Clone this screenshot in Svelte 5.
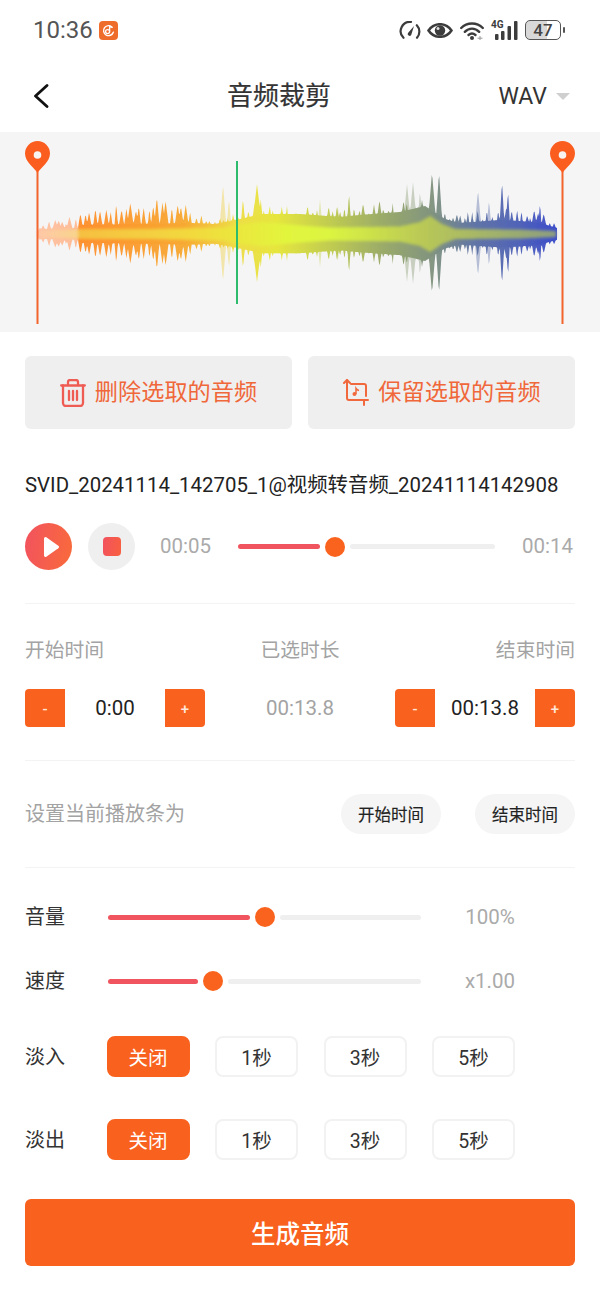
<script>
  const C = 102;
  const env = [[38,6],[44,13],[60,16],[78,18],[82,25],[90,30],[100,31],[115,32],[135,38],[150,37],[170,38],[188,33],[200,21],[215,16],[230,18],[240,26],[250,31],[262,36],[275,28],[295,30],[320,27],[340,29],[349,31],[380,36],[400,34],[420,34],[432,34],[445,24],[460,22],[480,24],[495,28],[510,32],[525,26],[540,28],[548,12],[557,16]];
  const floorT = [[38,3],[44,5],[78,6],[82,9],[190,11],[215,10],[240,15],[262,20],[300,20],[340,17],[360,19],[400,22],[425,28],[445,15],[460,11],[500,14],[520,13],[540,11],[557,6]];
  const tall = [[243,36,3],[257,50,6],[349,42,2.500],[432,62,5],[439,62,4],[502,53,3],[508,44,2.500],[540,32,2]];
  const faint = [[223,50,4],[229,36,3],[270,30,3],[320,35,3],[338,26,3],[407,50,5],[413,52,5],[420,44,3],[478,44,4],[489,34,3]];

  function lerp(table, x) {
    for (let i = 1; i < table.length; i++) {
      if (x <= table[i][0]) {
        const a = table[i - 1], b = table[i];
        return b[1] + ((a[1] - b[1]) * (b[0] - x)) / (b[0] - a[0]);
      }
    }
    return table[table.length - 1][1];
  }
  function rnd(k) {
    const s = Math.sin(k * 12.9898 + 4.100) * 43758.5453;
    return s - Math.floor(s);
  }
  function peakAmp(list, x) {
    let m = 0;
    for (const [px, a, w] of list) m = Math.max(m, a * (1 - Math.abs(x - px) / w));
    return m;
  }
  const spikes = [];
  for (let x = 40, k = 0; x < 557; k++) {
    spikes.push([x, lerp(env, x) * (0.62 + 0.4 * rnd(k)), 2.400 + 2.400 * rnd(k + 90)]);
    x += 2.800 + 3.600 * rnd(k + 50);
  }
  function shape(fn, start = 38, end = 557, step = 0.75, k = 0.96) {
    const top = [], bot = [];
    for (let x = start; x <= end; x += step) {
      const a = fn(x);
      top.push(`${x},${(C - a).toFixed(1)}`);
      bot.unshift(`${x},${(C + a * k).toFixed(1)}`);
    }
    return 'M' + top.concat(bot).join('L') + 'Z';
  }
  const mainPath = shape((x) => Math.max(lerp(floorT, x), peakAmp(spikes, x), peakAmp(tall, x)));
  const faintPath = shape((x) => Math.max(lerp(floorT, x), peakAmp(faint, x)));
  const coreTable = [[38,2],[42,4],[79,4.500],[80,5],[150,5],[225,6.500],[240,10],[262,12],[300,8.500],[330,6.500],[400,7.500],[420,12],[430,18],[442,10],[455,5],[520,4.500],[557,3]];
  const corePath = shape((x) => lerp(coreTable, x), 38, 557, 2, 1);

  const fades = ['淡入', '淡出'];
  const opts = ['关闭', '1秒', '3秒', '5秒'];
</script>

<div class="page">
  <div class="status">
    <span class="clock">10:36</span>
    <svg class="appicon" width="19" height="19" viewBox="0 0 19 19">
      <rect width="19" height="19" rx="4" fill="#ef6d2b" />
      <path d="M13.200 6.200a5 5 0 1 0 1.100 5" fill="none" stroke="#fff" stroke-width="1.400" stroke-linecap="round" />
      <circle cx="8.600" cy="10.600" r="2" fill="none" stroke="#fff" stroke-width="1.300" />
      <path d="M10.600 10.600V4.600q.6 1.600 2.200 1.900" fill="none" stroke="#fff" stroke-width="1.300" />
    </svg>
    <div class="sicons">
      <svg width="22" height="18" viewBox="0 0 22 18">
        <path d="M4.500 16.800A9.300 9.300 0 0 1 12 .9" fill="none" stroke="#3c3c3c" stroke-width="2.200" stroke-linecap="round" />
        <path d="M17.800 4.200a9.300 9.300 0 0 1 .2 12.600" fill="none" stroke="#3c3c3c" stroke-width="2.200" stroke-linecap="round" />
        <path d="M9 12l6-7-2.800 9a1.800 1.800 0 0 1-3.200-2z" fill="#3c3c3c" />
      </svg>
      <svg width="26" height="15" viewBox="0 0 26 15">
        <path d="M1.500 7.500C4.500 3 8 1.200 13 1.200S21.500 3 24.500 7.500C21.500 12 18 13.800 13 13.800S4.500 12 1.500 7.500z" fill="none" stroke="#3c3c3c" stroke-width="2.500" />
        <circle cx="13" cy="7.500" r="5.200" fill="#3c3c3c" />
        <circle cx="11" cy="5.500" r="1.500" fill="#ddd" />
      </svg>
      <svg width="24" height="19" viewBox="0 0 24 19">
        <path d="M1.200 7C7 1 17 1 22.800 7" fill="none" stroke="#3c3c3c" stroke-width="2.400" stroke-linecap="round" />
        <path d="M4.800 10.800C9 6.600 15 6.600 19.200 10.800" fill="none" stroke="#3c3c3c" stroke-width="2.400" stroke-linecap="round" />
        <path d="M8.500 14c2.200-1.800 4.800-1.800 7 0" fill="none" stroke="#3c3c3c" stroke-width="2.400" stroke-linecap="round" />
        <circle cx="12" cy="17" r="2" fill="#3c3c3c" />
        <path d="M17.500 17.200h5M20 15v4.400" fill="none" stroke="#999" stroke-width="1" />
      </svg>
      <div class="signal">
        <span class="g4">4G</span>
        <svg width="27" height="19" viewBox="0 0 27 19">
          <rect x="4" y="13" width="3.500" height="6" rx="1" fill="#3c3c3c" />
          <rect x="10" y="10" width="3.500" height="9" rx="1" fill="#3c3c3c" />
          <rect x="16.500" y="5" width="3.500" height="14" rx="1" fill="#3c3c3c" />
          <rect x="23" y="0" width="3.500" height="19" rx="1" fill="#3c3c3c" />
        </svg>
      </div>
      <div class="battery">
        <div class="cell"><span>47</span></div>
        <i class="nub"></i>
      </div>
    </div>
  </div>

  <header class="nav">
    <svg class="back" width="16" height="24" viewBox="0 0 16 24">
      <path d="M14 1.500L2.500 12 14 22.500" fill="none" stroke="#111" stroke-width="2.800" stroke-linecap="round" stroke-linejoin="round" />
    </svg>
    <h1>音频裁剪</h1>
    <div class="fmt"><span>WAV</span><i class="caret"></i></div>
  </header>

  <svg class="wave" width="600" height="200" viewBox="0 0 600 200">
    <defs>
      <linearGradient id="outer" gradientUnits="userSpaceOnUse" x1="38" y1="0" x2="557" y2="0">
        <stop offset="0" stop-color="#ffc0a0" />
        <stop offset="0.075" stop-color="#ffb890" />
        <stop offset="0.08" stop-color="#ff8a24" />
        <stop offset="0.28" stop-color="#f8a52a" />
        <stop offset="0.38" stop-color="#eedb3e" />
        <stop offset="0.46" stop-color="#e6e636" />
        <stop offset="0.56" stop-color="#bfcb48" />
        <stop offset="0.66" stop-color="#98a962" />
        <stop offset="0.76" stop-color="#7b8f7a" />
        <stop offset="0.84" stop-color="#5a6fa2" />
        <stop offset="0.92" stop-color="#4a5eb4" />
        <stop offset="1" stop-color="#3344c8" />
      </linearGradient>
      <linearGradient id="core" gradientUnits="userSpaceOnUse" x1="38" y1="0" x2="557" y2="0">
        <stop offset="0" stop-color="#ffc8a8" />
        <stop offset="0.075" stop-color="#f8d48c" />
        <stop offset="0.08" stop-color="#f6bf40" />
        <stop offset="0.3" stop-color="#f2da3e" />
        <stop offset="0.48" stop-color="#e2f53e" />
        <stop offset="0.56" stop-color="#dcf540" />
        <stop offset="0.74" stop-color="#b9c856" />
        <stop offset="1" stop-color="#8c9e7e" />
      </linearGradient>
      <filter id="soft" x="-5%" y="-5%" width="110%" height="110%"><feGaussianBlur stdDeviation="0.5" /></filter>
      <filter id="softer" x="-5%" y="-20%" width="110%" height="140%"><feGaussianBlur stdDeviation="1.500" /></filter>
    </defs>
    <rect width="600" height="200" fill="#f5f5f6" />
    <path d={faintPath} fill="url(#outer)" opacity="0.4" filter="url(#soft)" />
    <path d={mainPath} fill="url(#outer)" opacity="0.92" filter="url(#soft)" />
    <path d={corePath} fill="url(#core)" filter="url(#softer)" />
    <rect x="236" y="29" width="2" height="143" fill="#2dbb6e" />
    {#each [37.5, 562.5] as x}
      <g transform="translate({x} 0)">
        <rect x="-1" y="35" width="2" height="157" fill="#f4652c" />
        <path d="M0 41C-3 36-12.500 30-12.500 21.500a12.500 12.500 0 0 1 25 0C12.500 30 3 36 0 41z" fill="#fb5d1e" />
        <circle cx="0" cy="23" r="3.800" fill="#f7f4f2" />
      </g>
    {/each}
  </svg>

  <main class="body">
    <div class="actions">
      <button class="act">
        <svg width="26" height="28" viewBox="0 0 26 28">
          <g fill="none" stroke="#ef5c54" stroke-width="2.300" stroke-linecap="round" stroke-linejoin="round">
            <path d="M8 6V3a2 2 0 0 1 2-2h6a2 2 0 0 1 2 2v3" />
            <path d="M1.200 6.500h23.600" />
            <path d="M3 6.500V24a3 3 0 0 0 3 3h14a3 3 0 0 0 3-3V6.500" />
            <path d="M9 12v9M13 12v9M17 12v9" />
          </g>
        </svg>
        <span>删除选取的音频</span>
      </button>
      <button class="act">
        <svg width="27" height="27" viewBox="0 0 27 27">
          <g fill="none" stroke="#f0683c" stroke-width="2" stroke-linecap="round" stroke-linejoin="round">
            <path d="M5 1v18a2 2 0 0 0 2 2h19" />
            <path d="M2 4l3-3 3 3" />
            <path d="M22 26v-5" />
            <path d="M9 5h13a2 2 0 0 1 2 2v10" />
          </g>
          <circle cx="12.500" cy="15" r="2" fill="#f0683c" />
          <path d="M14 15V9.500q1 1.700 3 2" fill="none" stroke="#f0683c" stroke-width="1.500" />
        </svg>
        <span>保留选取的音频</span>
      </button>
    </div>

    <p class="fname">SVID_20241114_142705_1@视频转音频_20241114142908</p>

    <div class="player">
      <div class="play"><svg width="20" height="22" viewBox="0 0 20 22"><path d="M4 2.500v17a1.500 1.500 0 0 0 2.300 1.200l12-8.500a1.500 1.500 0 0 0 0-2.400l-12-8.500A1.500 1.500 0 0 0 4 2.500z" fill="#fff" /></svg></div>
      <div class="stop"><i></i></div>
      <span class="t t1">00:05</span>
      <div class="slider pslider">
        <i class="on" style="width:82px"></i>
        <i class="thumb"></i>
        <i class="off"></i>
      </div>
      <span class="t t2">00:14</span>
    </div>

    <hr />

    <div class="labels">
      <span>开始时间</span><span>已选时长</span><span>结束时间</span>
    </div>

    <div class="steppers">
      <div class="stepper">
        <button class="sb minus">-</button>
        <span class="val">0:00</span>
        <button class="sb plus">+</button>
      </div>
      <span class="dur">00:13.8</span>
      <div class="stepper">
        <button class="sb minus">-</button>
        <span class="val">00:13.8</span>
        <button class="sb plus">+</button>
      </div>
    </div>

    <hr />

    <div class="setrow">
      <span class="setlabel">设置当前播放条为</span>
      <button class="pill p1">开始时间</button>
      <button class="pill">结束时间</button>
    </div>

    <hr />

    <div class="prow vol">
      <span class="plabel">音量</span>
      <div class="slider wslider">
        <i class="on" style="width:142px"></i>
        <i class="thumb"></i>
        <i class="off"></i>
      </div>
      <span class="pval">100%</span>
    </div>
    <div class="prow spd">
      <span class="plabel">速度</span>
      <div class="slider wslider">
        <i class="on" style="width:90px"></i>
        <i class="thumb"></i>
        <i class="off"></i>
      </div>
      <span class="pval">x1.00</span>
    </div>

    {#each fades as f, i}
      <div class="fade" class:second={i === 1}>
        <span class="flabel">{f}</span>
        <div class="fopts">
          {#each opts as o, j}
            <button class="opt" class:sel={j === 0}>{o}</button>
          {/each}
        </div>
      </div>
    {/each}

    <button class="gen">生成音频</button>
  </main>
</div>

<style>
  :global(body) { margin: 0; background: #fff; }
  .page {
    width: 600px;
    height: 1299px;
    overflow: hidden;
    background: #fff;
    font-family: Roboto, "Noto Sans CJK SC", sans-serif;
    color: #222;
  }
  i { display: block; }
  .status { height: 60px; display: flex; align-items: center; padding: 0 35px 0 33px; box-sizing: border-box; }
  .clock { font-size: 24px; color: #555; }
  .appicon { margin-left: 6px; }
  .sicons { margin-left: auto; display: flex; align-items: center; }
  .sicons > svg:nth-child(1) { margin-right: 6px; }
  .sicons > svg:nth-child(2) { margin-right: 7px; }
  .sicons > svg:nth-child(3) { margin-right: 7px; }
  .signal { position: relative; width: 27px; height: 19px; margin-right: 7px; }
  .signal svg { display: block; }
  .g4 { position: absolute; left: 0; top: -1px; font-size: 10px; line-height: 10px; font-weight: 700; color: #3c3c3c; }
  .battery { display: flex; align-items: center; gap: 2px; }
  .cell { width: 36px; height: 20px; box-sizing: border-box; border: 1.500px solid #555; border-radius: 5px; background: linear-gradient(90deg, #d8d8d8 0 62%, #fff 62%); display: flex; align-items: center; justify-content: center; }
  .cell span { font-size: 17px; font-weight: 500; color: #444; line-height: 1; }
  .nub { width: 2px; height: 6px; background: #555; border-radius: 1px; }

  .nav { height: 72px; display: flex; align-items: center; padding: 0 30px 0 33px; box-sizing: border-box; }
  .nav h1 { margin: 0 0 0 178px; font-size: 26px; line-height: 72px; font-weight: 400; color: #333; -webkit-text-stroke: 0.2px #333; }
  .back { display: block; flex: none; }
  .fmt { margin-left: auto; display: flex; align-items: center; gap: 9px; font-size: 23px; color: #333; }
  .caret { width: 0; height: 0; border-left: 7px solid transparent; border-right: 7px solid transparent; border-top: 7px solid #cfcfcf; margin-top: 1px; }

  .wave { display: block; }

  .body { padding: 24px 25px 0; }
  .actions { display: flex; justify-content: space-between; }
  button { font-family: inherit; border: 0; padding: 0; margin: 0; }
  .act { width: 267px; height: 73px; background: #efefef; border-radius: 6px; display: flex; align-items: center; justify-content: center; gap: 9px; color: #f0673a; font-size: 23.200px; line-height: 1; }
  .act svg { display: block; flex: none; }
  .fname { margin: 42px 0 0; font-size: 20.400px; line-height: 28px; color: #222; white-space: nowrap; }

  .player { margin-top: 24px; height: 47px; display: flex; align-items: center; }
  .play { width: 47px; height: 47px; border-radius: 50%; background: linear-gradient(100deg, #f2525f, #f96b3a); display: flex; align-items: center; justify-content: center; padding-left: 2px; box-sizing: border-box; }
  .stop { width: 47px; height: 47px; border-radius: 50%; background: #efefef; margin-left: 16px; display: flex; align-items: center; justify-content: center; }
  .stop i { width: 18px; height: 19px; border-radius: 4px; background: linear-gradient(100deg, #f2525f, #f8603f); }
  .t { font-size: 20.500px; color: #aaa; line-height: 1; width: 51px; flex: none; }
  .t1 { margin-left: 25px; }
  .t2 { margin-left: 27px; }

  .slider { display: flex; align-items: center; }
  .slider .on { height: 5px; background: #f0555f; border-radius: 3px; }
  .slider .off { flex: 1; height: 5px; background: #efefef; border-radius: 3px; margin-left: 5px; }
  .slider .thumb { width: 20px; height: 20px; border-radius: 50%; background: #fa631d; margin-left: 5px; flex: none; }
  .pslider { width: 257px; margin-left: 27px; }
  .wslider { width: 313px; }

  hr { margin: 33px 0 0; border: 0; height: 1px; background: #f3f3f3; }
  .labels { margin-top: 33px; display: flex; justify-content: space-between; font-size: 19.800px; line-height: 28px; color: #a3a3a3; }

  .steppers { margin-top: 24px; display: flex; align-items: center; justify-content: space-between; }
  .stepper { width: 180px; display: flex; align-items: center; justify-content: space-between; }
  .sb { width: 40px; height: 38px; background: #f9621e; color: #ffe6d8; font-size: 15px; font-weight: 500; display: flex; align-items: center; justify-content: center; padding-top: 2px; box-sizing: border-box; }
  .minus { border-radius: 4px 0 0 4px; }
  .plus { border-radius: 0 4px 4px 0; }
  .val { font-size: 20.500px; color: #222; }
  .dur { font-size: 20.500px; color: #a3a3a3; }

  .setrow { margin-top: 33px; height: 40px; display: flex; align-items: center; }
  .setlabel { font-size: 20px; color: #a3a3a3; margin-right: auto; padding-bottom: 3px; }
  .pill { width: 100px; height: 40px; border-radius: 20px; background: #f5f5f5; font-size: 16.500px; color: #222; -webkit-text-stroke: 0.15px #222; }
  .p1 { margin-right: 34px; }

  .prow { height: 40px; display: flex; align-items: center; }
  .vol { margin-top: 29px; }
  .spd { margin-top: 24px; }
  .plabel { width: 83px; font-size: 20px; color: #333; flex: none; padding-bottom: 3px; }
  .pval { width: 98px; text-align: center; margin-left: 20px; font-size: 20.500px; color: #aaa; }

  .fade { margin-top: 35px; height: 41px; display: flex; align-items: center; }
  .fade.second { margin-top: 42px; }
  .flabel { width: 81.500px; flex: none; font-size: 20px; color: #333; padding-bottom: 2px; }
  .fopts { display: flex; gap: 25.500px; }
  .opt { width: 83px; height: 41px; box-sizing: border-box; border: 2px solid #f2f2f2; border-radius: 8px; background: #fff; font-size: 19.500px; color: #333; }
  .opt.sel { background: #f9621e; border-color: #f9621e; color: #fff; }

  .gen { display: block; margin-top: 39px; width: 550px; height: 67px; border-radius: 6px; background: #f9621e; color: #fff; font-size: 24.500px; font-weight: 500; }
</style>
